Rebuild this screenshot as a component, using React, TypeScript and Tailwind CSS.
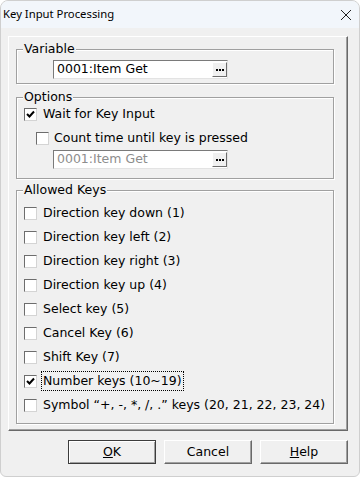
import React from 'react';

const KEYS = [
  { label: 'Direction key down (1)', checked: false },
  { label: 'Direction key left (2)', checked: false },
  { label: 'Direction key right (3)', checked: false },
  { label: 'Direction key up (4)', checked: false },
  { label: 'Select key (5)', checked: false },
  { label: 'Cancel Key (6)', checked: false },
  { label: 'Shift Key (7)', checked: false },
  { label: 'Number keys (10~19)', checked: true, focus: true },
  { label: 'Symbol \u201c+, -, *, /, .\u201d keys (20, 21, 22, 23, 24)', checked: false },
];

function CheckBox({ checked }: { checked: boolean }) {
  return (
    <span className="w-[13px] h-[13px] shrink-0 bg-white border border-t-[#6d6d6d] border-l-[#6d6d6d] border-r-[#d4d4d4] border-b-[#d4d4d4] flex items-center justify-center">
      {checked && (
        <svg width="9" height="9" viewBox="0 0 9 9">
          <path d="M1 4 L3.5 6.5 L8 1.5" fill="none" stroke="#000" strokeWidth="2" />
        </svg>
      )}
    </span>
  );
}

function Group({ title, className, children }: { title: string; className: string; children?: React.ReactNode }) {
  return (
    <div className={`relative w-[318px] border border-[#a0a0a0] shadow-[inset_1px_1px_0_white,1px_1px_0_white] ${className}`}>
      <span className="absolute -top-[9px] left-[6px] px-[1px] bg-[#f0f0f0] leading-[16px]">{title}</span>
      {children}
    </div>
  );
}

function VarField({ disabled }: { disabled?: boolean }) {
  return (
    <div className="ml-[36px] w-[175px] h-[19px] bg-white border border-t-[#7a7a7a] border-l-[#7a7a7a] border-r-[#e3e3e3] border-b-[#e3e3e3] flex items-center">
      <span className={`flex-1 pl-[3px] leading-none ${disabled ? 'text-[#8d8d8d]' : 'text-black'}`}>0001:Item Get</span>
      <span className="w-[15px] h-[15px] bg-[#f0f0f0] border border-t-white border-l-white border-r-[#6d6d6d] border-b-[#6d6d6d] flex items-center justify-center gap-[1px]">
        <i className="w-[2px] h-[2px] bg-black" />
        <i className="w-[2px] h-[2px] bg-black" />
        <i className="w-[2px] h-[2px] bg-black" />
      </span>
    </div>
  );
}

function Btn({ children, def }: { children: React.ReactNode; def?: boolean }) {
  return (
    <div
      className={`w-[88px] h-[24px] flex items-center justify-center bg-[#f0f0f0] ${
        def
          ? 'border border-[#3c3c3c] shadow-[inset_1px_1px_0_white,inset_-1px_-1px_0_#a0a0a0]'
          : 'border border-t-white border-l-white border-r-[#696969] border-b-[#696969] shadow-[inset_-1px_-1px_0_#a0a0a0]'
      }`}
    >
      {children}
    </div>
  );
}

export default function App() {
  return (
    <div
      className="w-[360px] h-[477px] bg-[#f0f0f0] text-black text-[12.5px] rounded-t-[8px] rounded-b-[6px] border border-[#cfcfcf] overflow-hidden flex flex-col"
      style={{ fontFamily: '"DejaVu Sans", Verdana, sans-serif' }}
    >
      {/* title bar */}
      <div className="h-[27px] bg-[#f2f6fb] flex items-center justify-between pl-[2px] pr-[7px]">
        <span className="text-[11.3px] text-black" style={{ fontFamily: '"Noto Sans", "Open Sans", sans-serif' }}>
          Key Input Processing
        </span>
        <svg width="12" height="12" viewBox="0 0 12 12">
          <path d="M1 1 L11 11 M11 1 L1 11" stroke="#222" strokeWidth="1" />
        </svg>
      </div>

      {/* main panel */}
      <div className="mt-[8px] ml-[7px] w-[340px] h-[395px] border border-t-white border-l-white border-r-[#696969] border-b-[#696969] shadow-[inset_-1px_-1px_0_#a0a0a0] pl-[7px] pt-[12px]">
        <Group title="Variable" className="h-[35px] pt-[10px]">
          <VarField />
        </Group>

        <Group title="Options" className="mt-[13px] h-[82px] pt-[4px]">
          <div className="h-[24px] flex items-center pl-[7px] gap-[6px]">
            <CheckBox checked />
            <span>Wait for Key Input</span>
          </div>
          <div className="h-[24px] flex items-center pl-[19px] gap-[5px]">
            <CheckBox checked={false} />
            <span>Count time until key is pressed</span>
          </div>
          <VarField disabled />
        </Group>

        <Group title="Allowed Keys" className="mt-[11px] h-[234px] pt-[10px]">
          {KEYS.map((k) => (
            <div key={k.label} className="h-[24px] flex items-center pl-[7px] gap-[5px]">
              <CheckBox checked={k.checked} />
              <span className={k.focus ? 'outline outline-1 outline-dotted outline-black px-[1px]' : 'px-[1px]'}>
                {k.label}
              </span>
            </div>
          ))}
        </Group>
      </div>

      {/* buttons */}
      <div className="mt-[9px] flex justify-end gap-[8px] pr-[11px]">
        <Btn def>
          <span>
            <u>O</u>K
          </span>
        </Btn>
        <Btn>Cancel</Btn>
        <Btn>
          <span>
            <u>H</u>elp
          </span>
        </Btn>
      </div>
    </div>
  );
}
